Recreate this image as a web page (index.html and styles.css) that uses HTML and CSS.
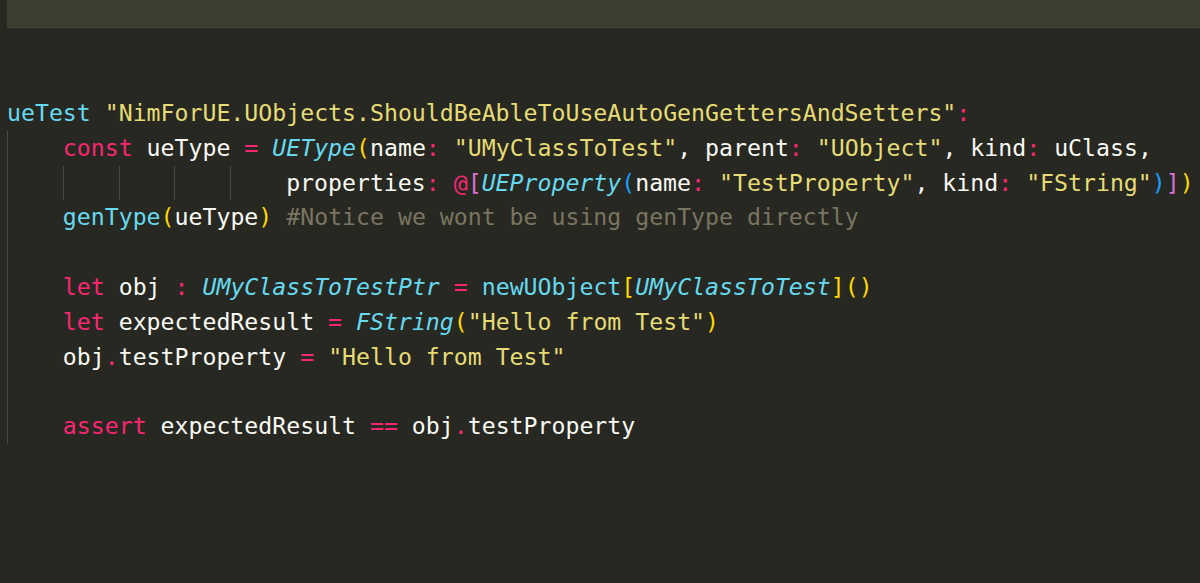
FILE: index.html
```html
<!DOCTYPE html>
<html>
<head>
<meta charset="utf-8">
<link rel="stylesheet" href="styles.css">
</head>
<body>
<div class="tabbar"></div>
<div class="editor">
<div class="line"><span class="fn">ueTest</span> <span class="str">"NimForUE.UObjects.ShouldBeAbleToUseAutoGenGettersAndSetters"</span><span class="kw">:</span></div>
<div class="block">
<div class="line">    <span class="kw">const</span> ueType <span class="kw">=</span> <span class="type">UEType</span><span class="b1">(</span>name<span class="kw">:</span> <span class="str">"UMyClassToTest"</span>, parent<span class="kw">:</span> <span class="str">"UObject"</span>, kind<span class="kw">:</span> uClass,</div>
<div class="line"><span class="guide">    </span><span class="guide">    </span><span class="guide">    </span><span class="guide">    </span><span class="guide">    </span>properties<span class="kw">:</span> <span class="kw">@</span><span class="b2">[</span><span class="type">UEProperty</span><span class="b3">(</span>name<span class="kw">:</span> <span class="str">"TestProperty"</span>, kind<span class="kw">:</span> <span class="str">"FString"</span><span class="b3">)</span><span class="b2">]</span><span class="b1">)</span></div>
<div class="line">    <span class="fn">genType</span><span class="b1">(</span>ueType<span class="b1">)</span> <span class="cm">#Notice we wont be using genType directly</span></div>
<div class="line"> </div>
<div class="line">    <span class="kw">let</span> obj <span class="kw">:</span> <span class="type">UMyClassToTestPtr</span> <span class="kw">=</span> <span class="fn">newUObject</span><span class="b1">[</span><span class="type">UMyClassToTest</span><span class="b1">]()</span></div>
<div class="line">    <span class="kw">let</span> expectedResult <span class="kw">=</span> <span class="type">FString</span><span class="b1">(</span><span class="str">"Hello from Test"</span><span class="b1">)</span></div>
<div class="line">    obj<span class="kw">.</span>testProperty <span class="kw">=</span> <span class="str">"Hello from Test"</span></div>
<div class="line"> </div>
<div class="line">    <span class="kw">assert</span> expectedResult <span class="kw">==</span> obj<span class="kw">.</span>testProperty</div>
</div>
</div>
</body>
</html>
```

FILE: styles.css
```css
html, body {
  margin: 0;
  padding: 0;
  background: #272822;
  height: 100%;
  overflow: hidden;
}

.tabbar {
  margin-left: 7px;
  height: 27px;
  background: #3e3d32;
  border-bottom: 1px solid #45443a;
}

.editor {
  padding-top: 68px;
  padding-left: 7px;
  font-family: "DejaVu Sans Mono", monospace;
  font-size: 23.2px;
  line-height: 34.8px;
  color: #f8f8f2;
}

.line {
  height: 34.8px;
  white-space: pre;
}

.block {
  box-shadow: inset 1px 0 0 #4a4a43;
}

.guide {
  display: inline-block;
  width: 4ch;
  height: 34.8px;
  vertical-align: top;
  box-shadow: inset 1px 0 0 #4a4a43;
}

.guide:first-child {
  box-shadow: none;
}

.kw { color: #f92672; }
.str { color: #e6db74; }
.fn { color: #66d9ef; }
.type { color: #66d9ef; font-style: italic; }
.cm { color: #797560; }
.b1 { color: #ffd700; }
.b2 { color: #da70d6; }
.b3 { color: #179fff; }
```
